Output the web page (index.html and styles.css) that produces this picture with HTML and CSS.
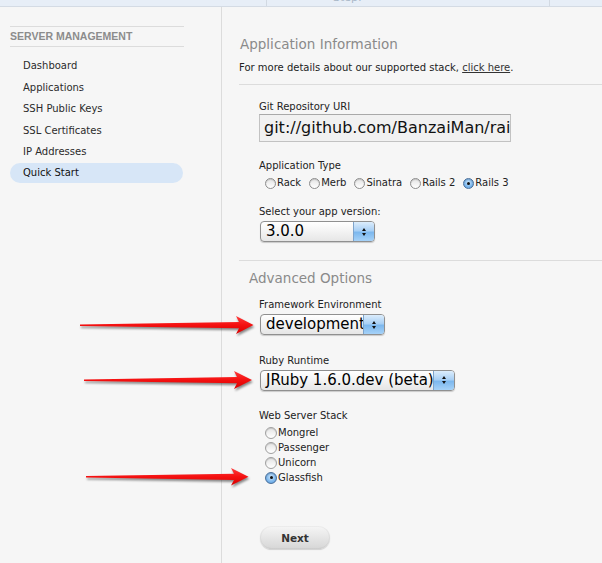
FILE: index.html
```html
<!DOCTYPE html>
<html>
<head>
<meta charset="utf-8">
<title>Quick Start</title>
<link rel="stylesheet" href="styles.css">
</head>
<body>
<div class="page">
  <div class="topbar">
    <div class="tb-cell tb-first"></div>
    <div class="tb-cell tb-mid"><span class="tb-step">Step:</span></div>
    <div class="tb-cell tb-last"></div>
  </div>
  <div class="layout">
    <aside class="sidebar">
      <h3 class="side-title">SERVER MANAGEMENT</h3>
      <ul class="side-nav">
        <li><a>Dashboard</a></li>
        <li><a>Applications</a></li>
        <li><a>SSH Public Keys</a></li>
        <li><a>SSL Certificates</a></li>
        <li><a>IP Addresses</a></li>
        <li class="active"><a>Quick Start</a></li>
      </ul>
    </aside>
    <main class="main">
      <h2 class="section-title">Application Information</h2>
      <p class="intro">For more details about our supported stack, <a class="link">click here</a>.</p>
      <hr class="rule">
      <div class="fields">
        <div class="field f-git">
          <div class="lbl">Git Repository URI</div>
          <div class="text-input"><span class="text-clip">git://github.com/BanzaiMan/rails3_jruby_app.git</span></div>
        </div>
        <div class="field f-type">
          <div class="lbl">Application Type</div>
          <div class="radio-row">
            <span class="radio"><span class="dot"></span>Rack</span>
            <span class="radio"><span class="dot"></span>Merb</span>
            <span class="radio"><span class="dot"></span>Sinatra</span>
            <span class="radio"><span class="dot"></span>Rails 2</span>
            <span class="radio"><span class="dot on"></span>Rails 3</span>
          </div>
        </div>
        <div class="field f-ver">
          <div class="lbl">Select your app version:</div>
          <div class="select select-sm"><span class="select-value">3.0.0</span><span class="stepper"><i class="up"></i><i class="down"></i></span></div>
        </div>
      </div>
      <hr class="rule rule-2">
      <h2 class="section-title sub">Advanced Options</h2>
      <div class="fields">
        <div class="field f-env">
          <div class="lbl">Framework Environment</div>
          <div class="select select-md"><span class="select-value">development</span><span class="stepper"><i class="up"></i><i class="down"></i></span></div>
        </div>
        <div class="field f-ruby">
          <div class="lbl">Ruby Runtime</div>
          <div class="select select-lg"><span class="select-value">JRuby 1.6.0.dev (beta)</span><span class="stepper"><i class="up"></i><i class="down"></i></span></div>
        </div>
        <div class="field f-web">
          <div class="lbl">Web Server Stack</div>
          <div class="radio-col">
            <span class="radio"><span class="dot"></span>Mongrel</span>
            <span class="radio"><span class="dot"></span>Passenger</span>
            <span class="radio"><span class="dot"></span>Unicorn</span>
            <span class="radio"><span class="dot on"></span>Glassfish</span>
          </div>
        </div>
        <div class="actions"><button class="btn">Next</button></div>
      </div>
    </main>
  </div>
  <svg class="arrows" width="602" height="563" viewBox="0 0 602 563">
    <defs>
      <linearGradient id="red" x1="0" y1="0" x2="0" y2="1">
        <stop offset="0" stop-color="#ff3b3b"/>
        <stop offset="0.5" stop-color="#f41010"/>
        <stop offset="1" stop-color="#d80000"/>
      </linearGradient>
    </defs>
    <path d="M80,324.4 L239,322 L236,316 L253.5,325 L236,334 L239,328.2 L80,326 Z" fill="url(#red)"/>
    <path d="M84,379.4 L237,377 L234,371 L252,380 L234,389 L237,383.2 L84,381 Z" fill="url(#red)"/>
    <path d="M86,476 L234,473.7 L231,468 L248.5,476.8 L231,485.6 L234,479.9 L86,477.6 Z" fill="url(#red)"/>
  </svg>
</div>
</body>
</html>
```

FILE: styles.css
```css
html, body {
  margin: 0;
  padding: 0;
}
body {
  background: #f6f6f6;
  font-family: "DejaVu Sans", "Verdana", sans-serif;
  font-size: 10px;
  color: #222;
}
.page {
  position: relative;
  width: 602px;
  height: 563px;
  overflow: hidden;
}

/* top bar */
.topbar {
  display: flex;
  height: 6px;
  background: #e7eef7;
  border-bottom: 1px solid #d4dbe4;
  overflow: hidden;
}
.tb-cell { height: 6px; }
.tb-first { width: 266px; border-right: 1px solid #d2d9e2; }
.tb-mid { width: 282px; border-right: 1px solid #d2d9e2; position: relative; }
.tb-last { flex: 1; }
.tb-step {
  display: block;
  margin: -8px 0 0 66px;
  font-size: 11px;
  line-height: 12px;
  color: #aab8c8;
}

/* layout */
.layout {
  display: flex;
  height: 556px;
}
.sidebar {
  width: 222px;
  flex: none;
  border-right: 1px solid #dcdcdc;
  padding: 19px 0 0 10px;
  box-sizing: border-box;
}
.side-title {
  margin: 0;
  width: 174px;
  border-top: 1px solid #dcdcdc;
  border-bottom: 1px solid #dcdcdc;
  font-family: "Liberation Sans", Arial, sans-serif;
  font-size: 10.5px;
  font-weight: bold;
  line-height: 19px;
  color: #8c8c8c;
}
.side-nav {
  list-style: none;
  margin: 8.3px 0 0 0;
  padding: 0;
  width: 173px;
}
.side-nav li {
  padding: 1px 0;
}
.side-nav a {
  display: block;
  line-height: 19.4px;
  padding-left: 13px;
  border-radius: 10px;
  color: #2b2b2b;
}
.side-nav .active a {
  background: #d7e6f7;
  color: #111;
}

/* main */
.main {
  flex: 1;
  padding: 27px 0 0 17px;
}
.section-title {
  margin: 0 0 0 1px;
  font-size: 13.5px;
  font-weight: normal;
  line-height: 20px;
  color: #8a8a8a;
}
.section-title.sub {
  margin: 6.5px 0 0 10px;
}
.intro {
  margin: 7px 0 0 0;
  line-height: 14px;
  color: #222;
}
.link {
  color: #333;
  text-decoration: underline;
}
.rule {
  margin: 9px 0 0 0;
  border: 0;
  border-top: 1px solid #dcdcdc;
  height: 0;
}
.rule-2 {
  margin-top: 18px;
}
.fields {
  padding-left: 20px;
}
.lbl {
  line-height: 14px;
  color: #222;
}
.f-git { margin-top: 15px; }
.f-type { margin-top: 17px; }
.f-ver { margin-top: 14px; }
.f-env { margin-top: 10.5px; }
.f-ruby { margin-top: 18.5px; }
.f-web { margin-top: 18px; }

.text-input {
  width: 252px;
  height: 28px;
  box-sizing: border-box;
  border: 1px solid #c2c2c2;
  border-top-color: #a9a9a9;
  background: #f1f1f1;
  padding: 0 0 0 4px;
  display: flex;
  align-items: center;
}
.text-clip {
  display: block;
  width: 246px;
  overflow: hidden;
  white-space: nowrap;
  font-size: 16px;
  line-height: 20px;
  color: #111;
}

/* radios */
.radio {
  display: inline-flex;
  align-items: center;
  color: #222;
  white-space: nowrap;
}
.dot {
  width: 11px;
  height: 11px;
  box-sizing: border-box;
  border-radius: 50%;
  border: 1px solid #8d8d8d;
  background: linear-gradient(#e4e4e4, #ffffff);
  box-shadow: inset 0 1px 1px rgba(0,0,0,0.15);
  margin-right: 1px;
  position: relative;
}
.dot.on {
  border-color: #4a6f9a;
  background: radial-gradient(circle at 50% 40%, #cfe6fb 0, #7bb6ec 60%, #4f93d8 100%);
}
.dot.on::after {
  content: "";
  position: absolute;
  left: 3px;
  top: 3px;
  width: 3px;
  height: 3px;
  border-radius: 50%;
  background: #111;
}
.radio-row {
  display: flex;
  gap: 8px;
  margin-top: 2px;
  padding-left: 6px;
  line-height: 16px;
}
.radio-col {
  display: flex;
  flex-direction: column;
  margin-top: 2.5px;
  padding-left: 6px;
  line-height: 15px;
}
.radio-col .radio { height: 15px; }
.radio-col .dot { width: 12px; height: 12px; border-color: #a0a0a0; }
.radio-col .dot.on { border-color: #4a6f9a; }
.radio-col .dot.on::after { left: 3.5px; top: 3.5px; }

/* selects */
.select {
  display: flex;
  height: 21px;
  box-sizing: border-box;
  margin-top: 2px;
  margin-left: 1px;
  border: 1px solid #909090;
  border-radius: 4px;
  background: linear-gradient(#ffffff, #f3f3f3 50%, #e6e6e6);
  box-shadow: 0 1px 1px rgba(0,0,0,0.18);
  overflow: hidden;
}
.select-sm { width: 115px; }
.select-md { width: 125px; }
.select-lg { width: 195px; }
.select-value {
  flex: 1;
  min-width: 0;
  overflow: hidden;
  white-space: nowrap;
  padding-left: 5px;
  font-size: 15px;
  line-height: 19px;
  color: #000;
}
.stepper {
  width: 20px;
  flex: none;
  border-left: 1px solid #7ea4cc;
  background: linear-gradient(#dcedfc, #a9d0f5 45%, #7db8ee 55%, #a6d2f8);
  display: flex;
  flex-direction: column;
  align-items: center;
  justify-content: center;
  gap: 2px;
}
.stepper i {
  display: block;
  width: 0;
  height: 0;
  border-left: 2.5px solid transparent;
  border-right: 2.5px solid transparent;
}
.stepper .up { border-bottom: 3px solid #111; }
.stepper .down { border-top: 3px solid #111; }

/* button */
.actions {
  margin-top: 41px;
  padding-left: 1px;
}
.btn {
  width: 70px;
  height: 23px;
  border: 0;
  border-radius: 12px;
  background: linear-gradient(#f6f6f6, #e6e6e6 50%, #d6d6d6);
  box-shadow: 0 1px 1px rgba(0,0,0,0.15), inset 0 0 0 1px rgba(0,0,0,0.04);
  font-family: "DejaVu Sans", sans-serif;
  font-size: 10.5px;
  font-weight: bold;
  color: #333;
  padding: 0;
}

/* annotation arrows */
.arrows {
  position: absolute;
  left: 0;
  top: 0;
  pointer-events: none;
  filter: drop-shadow(1px 2px 1px rgba(0,0,0,0.45));
}
```
